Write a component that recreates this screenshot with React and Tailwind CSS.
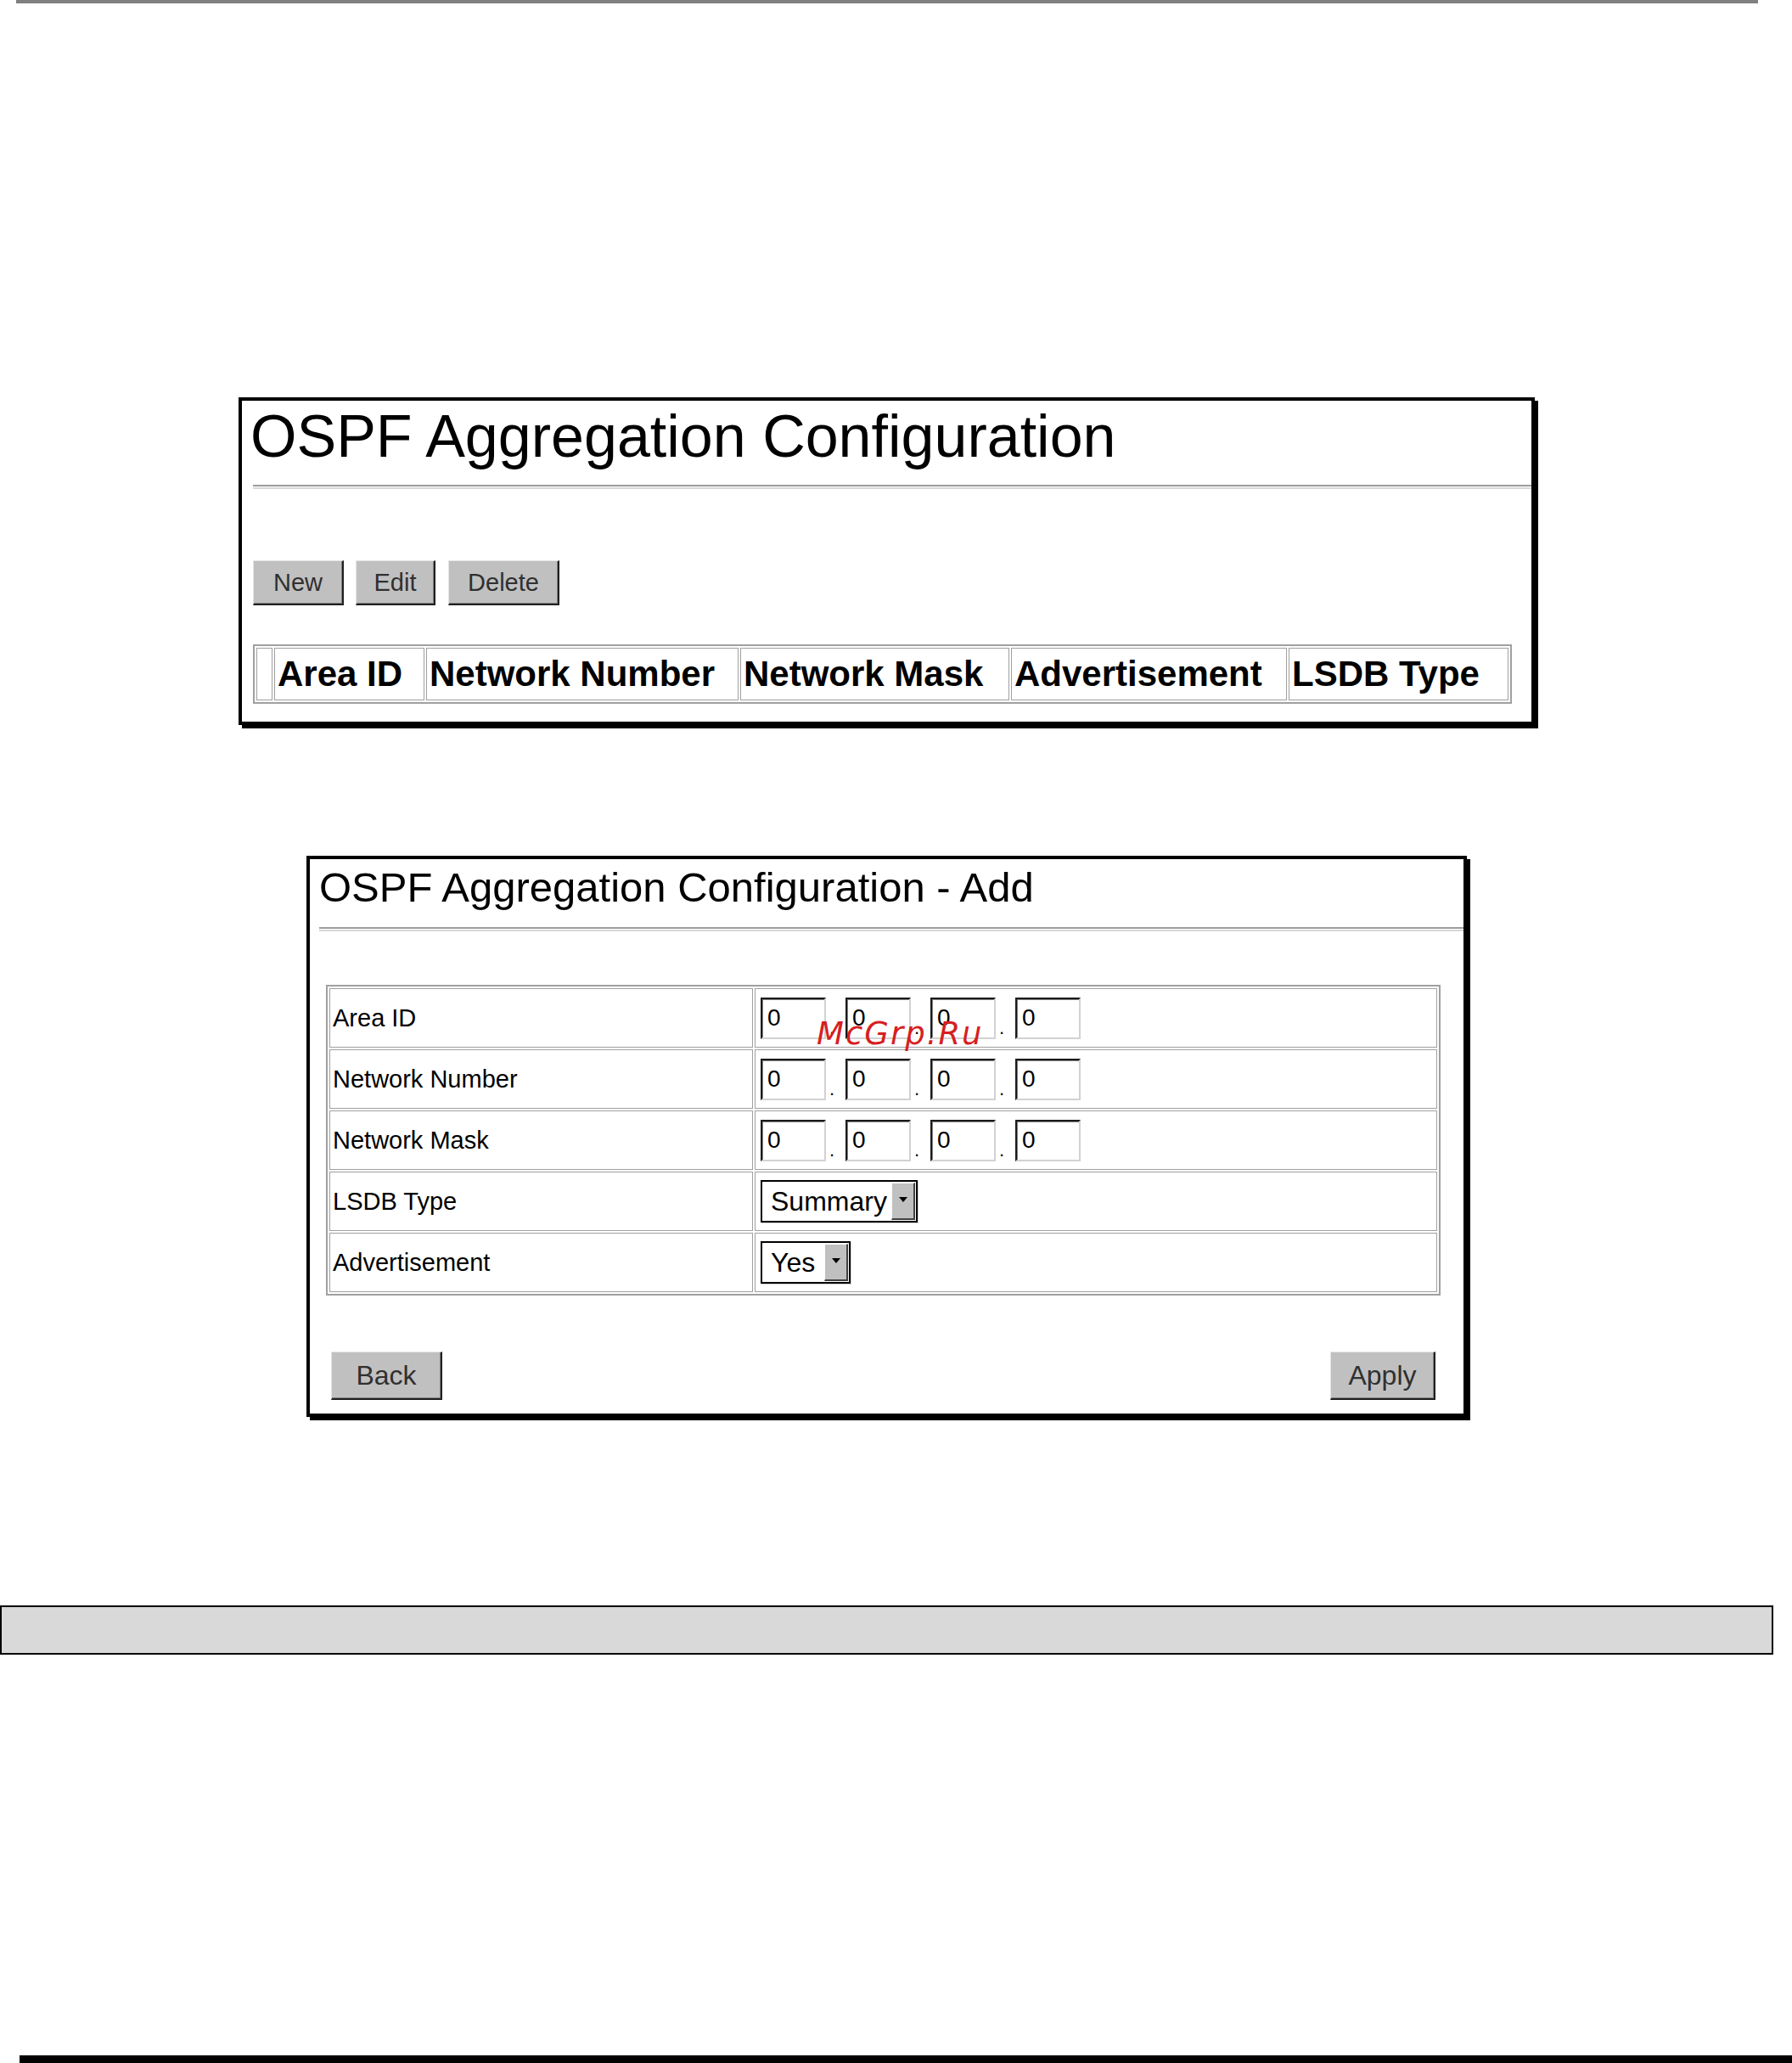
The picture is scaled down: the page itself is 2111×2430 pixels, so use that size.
import React from 'react';

const btn =
  'flex items-center justify-center bg-[#c0c0c0] border-t border-l border-t-[#e4e4e4] border-l-[#e4e4e4] border-b-2 border-r-2 border-b-[#202020] border-r-[#202020] shadow-[inset_-1px_-1px_0_#808080] text-[#303030] leading-none';

const ipBox =
  'w-[77px] h-[49px] border-2 border-t-[#1a1a1a] border-l-[#1a1a1a] border-b-[#d2d2d2] border-r-[#d2d2d2] shadow-[inset_1px_1px_0_#808080] bg-white pl-[6px] text-[28px] leading-none text-black outline-none';

const IpField = () => (
    <div className="flex items-end">
        {[0, 1, 2, 3].map((i) => (
            <React.Fragment key={i}>
                <input readOnly value="0" className={ipBox} />
                {i < 3 && <span className="w-[23px] pl-[4px] pb-[2px] text-[22px] leading-none">.</span>}
            </React.Fragment>
        ))}
    </div>
);

const Select = ({ value, width }) => (
    <div className={`flex h-[50px] border-2 border-black bg-white shadow-[1px_1px_0_#d0d0d0] ${width}`}>
        <span className="flex-1 pl-[10px] text-[32px] leading-[46px] text-black">{value}</span>
        <span className="w-[28px] my-[1px] mr-[1px] bg-[#c0c0c0] border-t border-l border-white border-b-2 border-r-2 border-b-[#404040] border-r-[#404040] flex items-center justify-center pb-[3px]">
            <svg width="10" height="6" viewBox="0 0 10 6">
                <path d="M0 0h10L5 6z" fill="#000" />
            </svg>
        </span>
    </div>
);

const headCols = [
    { label: '', w: 'w-[19px]' },
    { label: 'Area ID', w: 'w-[177px]' },
    { label: 'Network Number', w: 'w-[368px]' },
    { label: 'Network Mask', w: 'w-[317px]' },
    { label: 'Advertisement', w: 'w-[325px]' },
    { label: 'LSDB Type', w: 'w-[259px]' },
];

const formRows = [
    { label: 'Area ID', field: <IpField /> },
    { label: 'Network Number', field: <IpField /> },
    { label: 'Network Mask', field: <IpField /> },
    { label: 'LSDB Type', field: <Select value="Summary" width="w-[185px]" /> },
    { label: 'Advertisement', field: <Select value="Yes" width="w-[106px]" /> },
];

const Rule = ({ className }) => (
    <div className={`h-[5px] border-t-2 border-b-2 border-t-[#9c9c9c] border-b-[#d8d8d8] ${className}`} />
);

export default function App() {
    return (
        <div className="w-[2111px] h-[2430px] bg-white flex flex-col overflow-hidden font-['Liberation_Sans',Arial,sans-serif] text-black">
            {/* top rule */}
            <div className="ml-[19px] w-[2052px] h-[4px] bg-[#808080]" />

            {/* list screen */}
            <section className="mt-[464px] ml-[281px] w-[1527px] h-[386px] border-4 border-black shadow-[4px_4px_0_0_#000] flex flex-col">
                <h1 className="pl-[10px] pt-[7px] text-[70px] leading-[70px] font-normal whitespace-nowrap">
                    OSPF Aggregation Configuration
                </h1>
                <Rule className="mt-[22px] ml-[13px]" />

                <div className="mt-[84px] ml-[13px] flex">
                    <button className={`${btn} w-[107px] h-[53px] text-[29px]`}>New</button>
                    <button className={`${btn} ml-[14px] w-[94px] h-[53px] text-[29px]`}>Edit</button>
                    <button className={`${btn} ml-[15px] w-[131px] h-[53px] text-[29px]`}>Delete</button>
                </div>

                <table className="mt-[46px] ml-[13px] w-[1483px] table-fixed border-separate border-spacing-[2px] border-2 border-[#a0a0a0]">
                    <thead>
                        <tr>
                            {headCols.map((c, i) => (
                                <th
                                    key={i}
                                    className={`${c.w} h-[62px] border border-[#a0a0a0] pl-[3px] text-left align-middle font-bold text-[42px] leading-none whitespace-nowrap`}
                                >
                                    {c.label}
                                </th>
                            ))}
                        </tr>
                    </thead>
                </table>
            </section>

            {/* add screen */}
            <section className="relative mt-[154px] ml-[361px] w-[1367px] h-[661px] border-4 border-black shadow-[4px_4px_0_0_#000] flex flex-col">
                <h2 className="pl-[11px] pt-[9px] text-[49px] leading-[49px] font-normal whitespace-nowrap">
                    OSPF Aggregation Configuration - Add
                </h2>
                <Rule className="mt-[22px] ml-[11px]" />

                <table className="mt-[63px] ml-[19px] w-[1313px] table-fixed border-separate border-spacing-[2px] border-2 border-[#a0a0a0]">
                    <tbody>
                        {formRows.map((r) => (
                            <tr key={r.label}>
                                <td className="w-[499px] h-[70px] border border-[#a0a0a0] pl-[3px] align-middle text-[29px] leading-none whitespace-nowrap">
                                    {r.label}
                                </td>
                                <td className="h-[70px] border border-[#a0a0a0] pl-[6px] align-middle">{r.field}</td>
                            </tr>
                        ))}
                    </tbody>
                </table>

                <div className="mt-[66px] pl-[25px] pr-[33px] flex justify-between">
                    <button className={`${btn} w-[131px] h-[57px] text-[32px]`}>Back</button>
                    <button className={`${btn} w-[124px] h-[57px] text-[32px]`}>Apply</button>
                </div>

                {/* watermark */}
                <span className="absolute left-[597px] top-[187px] font-['DejaVu_Sans',sans-serif] italic text-[37px] leading-[37px] tracking-[2px] text-[#d61f1f]">
                    McGrp.Ru
                </span>
            </section>

            {/* gray bar */}
            <div className="mt-[222px] w-[2089px] h-[58px] border-2 border-black bg-[#d9d9d9]" />

            {/* bottom rule */}
            <div className="mt-[472px] ml-[23px] w-[2088px] h-[9px] bg-black" />
        </div>
    );
}
